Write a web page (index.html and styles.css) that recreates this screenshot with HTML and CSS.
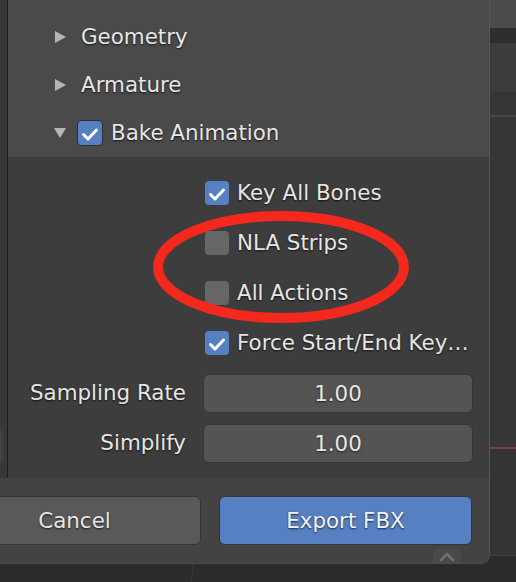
FILE: index.html
```html
<!DOCTYPE html>
<html>
<head>
<meta charset="utf-8">
<link rel="stylesheet" href="styles.css">
</head>
<body>
<div class="page">
  <div class="left-col">
    <div class="window">
      <div class="main">
        <div class="left-strip"><div class="strip-tab"></div></div>
        <div class="sidebar">
          <div class="panel-head">
            <div class="sub">
              <svg class="tri" width="12" height="12" viewBox="0 0 12 12"><polygon points="1,0 12,6 1,12" /></svg>
              <span class="sub-label">Geometry</span>
            </div>
            <div class="sub">
              <svg class="tri" width="12" height="12" viewBox="0 0 12 12"><polygon points="1,0 12,6 1,12" /></svg>
              <span class="sub-label">Armature</span>
            </div>
            <div class="sub">
              <svg class="tri" width="12" height="12" viewBox="0 0 12 12"><polygon points="0,1 12,1 6,11" /></svg>
              <span class="cb checked head-cb"><svg width="24" height="24" viewBox="0 0 24 24"><path d="M5.5 13.5 L10 18 L18.5 9" /></svg></span>
              <span class="cb-label head-label">Bake Animation</span>
            </div>
          </div>
          <div class="panel-body">
            <div class="row check-row">
              <span class="cb checked"><svg width="24" height="24" viewBox="0 0 24 24"><path d="M5.5 13.5 L10 18 L18.5 9" /></svg></span>
              <span class="cb-label">Key All Bones</span>
            </div>
            <div class="row check-row">
              <span class="cb"></span>
              <span class="cb-label">NLA Strips</span>
            </div>
            <div class="row check-row">
              <span class="cb"></span>
              <span class="cb-label">All Actions</span>
            </div>
            <div class="row check-row">
              <span class="cb checked"><svg width="24" height="24" viewBox="0 0 24 24"><path d="M5.5 13.5 L10 18 L18.5 9" /></svg></span>
              <span class="cb-label">Force Start/End Key…</span>
            </div>
            <div class="row field-row">
              <span class="field-label">Sampling Rate</span>
              <div class="field">1.00</div>
            </div>
            <div class="row field-row">
              <span class="field-label">Simplify</span>
              <div class="field">1.00</div>
            </div>
          </div>
        </div>
      </div>
      <div class="footer">
        <div class="buttons">
          <div class="btn">Cancel</div>
          <div class="btn primary">Export FBX</div>
        </div>
        <div class="tab-row">
          <div class="tab"><svg width="28" height="14" viewBox="0 0 28 14"><path d="M8 11 L14 5 L20 11" /></svg></div>
        </div>
      </div>
    </div>
    <div class="below"><div class="below-line"></div></div>
  </div>
  <div class="right-col">
    <div class="band b1"></div>
    <div class="band b2"></div>
    <div class="band b3"></div>
    <div class="band b4"></div>
    <div class="band b5"></div>
    <div class="band b6"></div>
    <div class="band b7"></div>
    <div class="band b8"></div>
    <div class="band b9"></div>
    <div class="band b10"></div>
  </div>
  <svg class="annot" width="256" height="112" viewBox="0 0 256 112"><ellipse cx="128" cy="56" rx="123" ry="51" /></svg>
</div>
</body>
</html>
```

FILE: styles.css
```css
html, body {
  margin: 0;
  padding: 0;
  background: #2b2b2b;
}
body {
  font-family: "DejaVu Sans", "Liberation Sans", sans-serif;
  font-size: 21.4px;
  color: #e6e6e6;
}
.page {
  position: relative;
  width: 516px;
  height: 582px;
  display: flex;
  overflow: hidden;
}
.left-col {
  width: 490px;
  display: flex;
  flex-direction: column;
  background: #2b2b2b;
}
.window {
  height: 563px;
  display: flex;
  flex-direction: column;
  border-right: 1px solid #555555;
  border-bottom: 1px solid #4c4c4c;
  border-bottom-right-radius: 9px;
  overflow: hidden;
  background: #434343;
}
.main {
  height: 478px;
  display: flex;
}
.left-strip {
  width: 8px;
  background: #383838;
  border-right: 1px solid #1c1c1c;
  display: flex;
  flex-direction: column;
  justify-content: flex-end;
  padding-bottom: 16px;
  box-sizing: border-box;
}
.strip-tab {
  width: 3px;
  height: 32px;
  background: #414141;
  border-radius: 0 3px 3px 0;
}
.sidebar {
  flex: 1;
  display: flex;
  flex-direction: column;
}
.panel-head {
  background: #4a4a4a;
  height: 157px;
  box-sizing: border-box;
  padding-top: 13px;
}
.sub {
  height: 48px;
  display: flex;
  align-items: center;
  padding-left: 46px;
}
.tri {
  fill: #b6b6b6;
  flex: none;
}
.sub-label {
  margin-left: 15px;
  text-shadow: 0 1px 2px rgba(0, 0, 0, 0.75);
  line-height: 1;
}
.cb {
  width: 24px;
  height: 24px;
  border-radius: 4px;
  background: #666666;
  flex: none;
  display: flex;
}
.cb.checked {
  background: #5680c2;
}
.cb svg path {
  fill: none;
  stroke: #ffffff;
  stroke-width: 3;
  stroke-linecap: round;
  stroke-linejoin: round;
}
.head-cb {
  margin-left: 12px;
  box-shadow: 0 0 0 1px #2f2f2f;
}
.cb-label {
  margin-left: 8px;
  text-shadow: 0 1px 2px rgba(0, 0, 0, 0.75);
  line-height: 1;
  white-space: nowrap;
}
.head-label {
  margin-left: 9px;
}
.panel-body {
  flex: 1;
  background: #3d3d3d;
  padding-top: 11px;
  padding-right: 16px;
  display: grid;
  grid-template-columns: 178px 1fr;
  column-gap: 17px;
  grid-auto-rows: 50px;
  align-content: start;
}
.row {
  display: contents;
}
.check-row {
  display: flex;
  grid-column: 2;
  align-items: center;
}
.check-row .cb {
  margin-left: 2px;
}
.field-label {
  grid-column: 1;
  justify-self: end;
  align-self: center;
  text-shadow: 0 1px 2px rgba(0, 0, 0, 0.75);
  line-height: 1;
  white-space: nowrap;
}
.field {
  grid-column: 2;
  align-self: center;
  height: 37px;
  background: #545454;
  border: 1px solid #363636;
  border-radius: 6px;
  display: flex;
  align-items: center;
  justify-content: center;
  text-shadow: 0 1px 2px rgba(0, 0, 0, 0.6);
}
.footer {
  flex: 1;
  display: flex;
  flex-direction: column;
  padding-top: 18px;
  box-sizing: border-box;
  background: #434343;
}
.buttons {
  display: flex;
  gap: 18px;
  margin-left: -52px;
}
.btn {
  width: 251px;
  height: 47px;
  border: 1px solid #353535;
  border-radius: 6px;
  background: #595959;
  display: flex;
  align-items: center;
  justify-content: center;
  text-shadow: 0 1px 2px rgba(0, 0, 0, 0.7);
  flex: none;
}
.btn.primary {
  background: #5680c2;
  color: #f2f2f2;
}
.tab-row {
  display: flex;
  justify-content: flex-end;
  padding-right: 28px;
  margin-top: 4px;
}
.tab {
  width: 28px;
  height: 14px;
  background: #4a4a4a;
  border-radius: 4px 4px 0 0;
}
.tab svg {
  display: block;
}
.tab path {
  fill: none;
  stroke: #707070;
  stroke-width: 2.5;
  stroke-linecap: round;
  stroke-linejoin: round;
}
.below {
  flex: 1;
  background: #2b2b2b;
  position: relative;
  overflow: hidden;
}
.below-line {
  width: 1px;
  height: 40px;
  margin-left: 193px;
  background: #3a3a3a;
  transform: rotate(8deg);
  transform-origin: top left;
}
.right-col {
  flex: 1;
  display: flex;
  flex-direction: column;
  background: #363636;
}
.band { flex: none; }
.b1 { height: 28px; background: #4b4b4b; }
.b2 { height: 15px; background: #2e2e2e; }
.b3 { height: 49px; background: #3c3c3c; }
.b4 { height: 23px; background: #363636; }
.b5 { height: 2px; background: #474747; }
.b6 { height: 330px; background: #363636; }
.b7 { height: 2px; background: #8b3a45; }
.b8 { height: 106px; background: #343434; }
.b9 { height: 1px; background: #3f3f3f; }
.b10 { flex: 1; background: #2b2b2b; }
.annot {
  position: absolute;
  left: 153px;
  top: 211px;
}
.annot ellipse {
  fill: none;
  stroke: #f5281d;
  stroke-width: 10;
}
```
